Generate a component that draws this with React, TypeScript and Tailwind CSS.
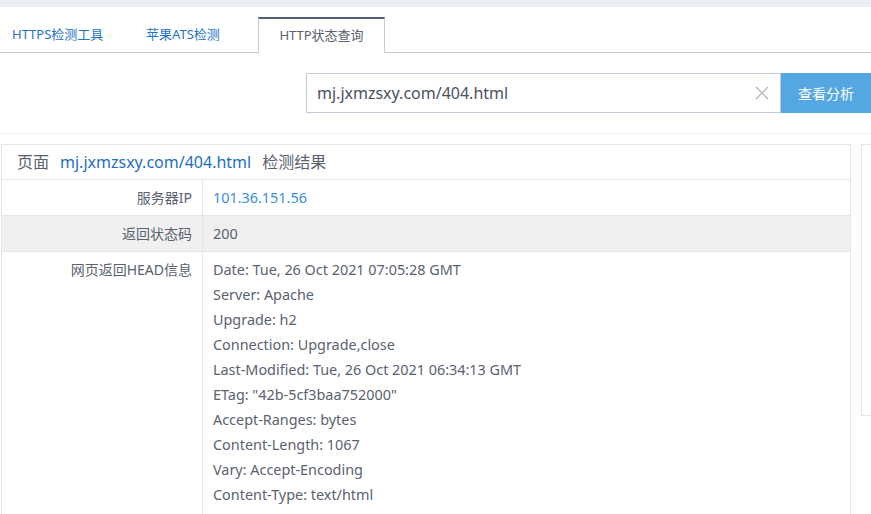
import React from 'react';

const headers = [
  'Date: Tue, 26 Oct 2021 07:05:28 GMT',
  'Server: Apache',
  'Upgrade: h2',
  'Connection: Upgrade,close',
  'Last-Modified: Tue, 26 Oct 2021 06:34:13 GMT',
  'ETag: "42b-5cf3baa752000"',
  'Accept-Ranges: bytes',
  'Content-Length: 1067',
  'Vary: Accept-Encoding',
  'Content-Type: text/html',
];

export default function App() {
  return (
    <div
      className="w-[871px] h-[514px] overflow-hidden bg-white text-[#5a6270]"
      style={{ fontFamily: '"Noto Sans", "Noto Sans CJK SC", sans-serif' }}
    >
      {/* top band */}
      <div className="h-[7px] bg-[#e9eff5]" />

      {/* tabs */}
      <div className="flex items-end h-[46px] border-b border-[#c5cbd9] text-[13px]">
        <div className="w-[125px] h-[35px] flex items-center pl-3 text-[#1f74c4]">HTTPS检测工具</div>
        <div className="w-[133px] h-[35px] flex items-center pl-[21px] text-[#1f74c4]">苹果ATS检测</div>
        <div className="w-[127px] h-[36px] -mb-px flex items-center justify-center bg-white border-t-2 border-t-[#505d7b] border-x border-x-[#c5cbd9] text-[#5a6270]">
          HTTP状态查询
        </div>
      </div>

      {/* search */}
      <div className="h-[81px] border-b border-[#f0f0f0] flex justify-end pt-5">
        <div className="w-[475px] h-[40px] border border-[#c5cbd9] flex items-center pl-[10px] pr-[11px]">
          <span className="flex-1 text-[16px] text-[#4a5262]">mj.jxmzsxy.com/404.html</span>
          <svg width="14" height="14" viewBox="0 0 14 14" className="text-[#b0b0b0]">
            <path d="M1 1 L13 13 M13 1 L1 13" stroke="currentColor" strokeWidth="1.2" fill="none" />
          </svg>
        </div>
        <div className="w-[90px] h-[40px] bg-[#55a7e2] text-white text-[14px] flex items-center justify-center">查看分析</div>
      </div>

      {/* results */}
      <div className="flex items-start mt-[10px] pl-px">
        <div className="w-[850px] border border-[#e5e5e5] text-[14px]">
          <div className="h-[35px] flex items-center px-[15px] text-[16px] border-b border-[#e5e5e5]">
            <span>页面</span>
            <span className="ml-[11px] text-[#1f6fbf]">mj.jxmzsxy.com/404.html</span>
            <span className="ml-[11px]">检测结果</span>
          </div>
          <div className="flex h-[36px] border-b border-[#e5e5e5]">
            <div className="w-[201px] border-r border-[#e5e5e5] flex items-center justify-end pr-[10px]">服务器IP</div>
            <div className="flex-1 flex items-center pl-[10px] text-[14.4px] text-[#3a8de0]">101.36.151.56</div>
          </div>
          <div className="flex h-[36px] border-b border-[#e5e5e5] bg-[#f0f0f0]">
            <div className="w-[201px] border-r border-[#e5e5e5] flex items-center justify-end pr-[10px]">返回状态码</div>
            <div className="flex-1 flex items-center pl-[10px] text-[14.4px]">200</div>
          </div>
          <div className="flex">
            <div className="w-[201px] border-r border-[#e5e5e5] text-right pr-[10px] pt-[5px] leading-[25px]">网页返回HEAD信息</div>
            <div className="flex-1 pl-[10px] pt-[5px] pb-[7px] leading-[25px] text-[14.4px]">
              {headers.map((h) => (
                <div key={h}>{h}</div>
              ))}
            </div>
          </div>
        </div>
        <div className="ml-[10px] flex-1 h-[272px] border border-r-0 border-[#e5e5e5]" />
      </div>
    </div>
  );
}
